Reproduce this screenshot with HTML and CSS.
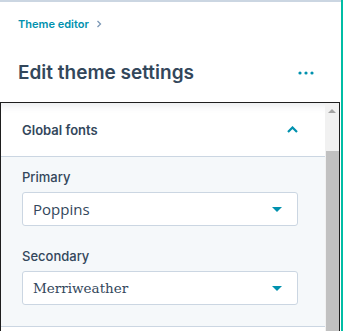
FILE: index.html
```html
<!DOCTYPE html>
<html lang="en">
<head>
    <meta charset="UTF-8">
    <meta name="viewport" content="width=device-width, initial-scale=1.0">
    <title>Edit theme settings</title>
    <link rel="stylesheet" href="styles.css">
</head>
<body>
<div class="panel">
    <div class="panel-head">
        <nav class="crumbs">
            <a href="#">Theme editor</a>
            <svg class="crumb-chevron" width="6" height="8" viewBox="0 0 6 8"><path d="M1.5 1 L4.5 4 L1.5 7" fill="none" stroke="#7c98b6" stroke-width="1.3"/></svg>
        </nav>
        <div class="title-row">
            <h1>Edit theme settings</h1>
            <button type="button" class="more">
                <svg width="16" height="4" viewBox="0 0 16 4"><circle cx="2" cy="2" r="1.6"/><circle cx="8" cy="2" r="1.6"/><circle cx="14" cy="2" r="1.6"/></svg>
            </button>
        </div>
    </div>

    <div class="scroll">
        <div class="scroll-content">
            <section class="group">
                <div class="group-head">
                    <h2>Global fonts</h2>
                    <svg width="11" height="7" viewBox="0 0 11 7"><path d="M1 6 L5.5 1.5 L10 6" fill="none" stroke="#0091ae" stroke-width="2.2"/></svg>
                </div>
                <div class="group-body">
                    <div class="field">
                        <span class="field-label">Primary</span>
                        <div class="select">
                            <span class="select-value font-poppins">Poppins</span>
                            <span class="caret"></span>
                        </div>
                    </div>
                    <div class="field">
                        <span class="field-label">Secondary</span>
                        <div class="select">
                            <span class="select-value font-merri">Merriweather</span>
                            <span class="caret"></span>
                        </div>
                    </div>
                </div>
            </section>
        </div>
        <div class="scrollbar">
            <div class="sb-up"></div>
            <div class="sb-thumb"></div>
        </div>
    </div>
</div>
</body>
</html>
```
FILE: styles.css
```css
body {
    margin: 0;
    background-color: #fff;
    font-family: Inter, "Noto Sans", sans-serif;
    color: #33475b;
}

.panel {
    width: 341px;
    height: 331px;
    border-right: 2px solid #00bda5;
    overflow: hidden;
}

.panel-head {
    border-top: 2px solid #cbd6e2;
    box-sizing: border-box;
    height: 102px;
    padding: 0 27px 0 18px;
}

.crumbs {
    display: flex;
    align-items: center;
    gap: 7px;
    padding-top: 14px;
    height: 16px;
}

.crumbs a {
    color: #0091ae;
    font-size: 11px;
    font-weight: 600;
    text-decoration: none;
}

.title-row {
    display: flex;
    align-items: center;
    justify-content: space-between;
    margin-top: 29px;
}

h1 {
    margin: 0;
    font-size: 19px;
    font-weight: 600;
    line-height: 24px;
}

.more {
    border: none;
    background: none;
    padding: 0;
    display: flex;
    fill: #0091ae;
}

.scroll {
    display: flex;
    height: 229px;
    border: 1px solid #1e1e1e;
    border-bottom: none;
    margin-right: 1px;
}

.scroll-content {
    flex: 1;
}

.group {
    border-bottom: 1px solid #cbd6e2;
}

.group-head {
    display: flex;
    align-items: center;
    justify-content: space-between;
    height: 53px;
    padding: 0 27px 0 21px;
    border-bottom: 1px solid #cbd6e2;
    background-color: #fff;
    box-shadow: inset 0 10px 8px -8px rgba(45, 62, 80, 0.12);
}

h2 {
    margin: 0;
    font-size: 13px;
    font-weight: 600;
}

.group-body {
    background-color: #f5f8fa;
    padding: 12px 27px 21px 21px;
    display: flex;
    flex-direction: column;
    gap: 22px;
}

.field {
    display: flex;
    flex-direction: column;
    gap: 7px;
}

.field-label {
    font-size: 13px;
    font-weight: 500;
    line-height: 16px;
}

.select {
    display: flex;
    align-items: center;
    justify-content: space-between;
    height: 34px;
    box-sizing: border-box;
    background-color: #fff;
    border: 1px solid #cbd6e2;
    border-radius: 3px;
    padding: 0 15px 0 10px;
}

.select-value {
    font-size: 15px;
}

.font-poppins {
    font-family: "Open Sans", sans-serif;
}

.font-merri {
    font-family: "DejaVu Serif", serif;
    font-size: 13.5px;
}

.caret {
    width: 0;
    height: 0;
    border-left: 5px solid transparent;
    border-right: 5px solid transparent;
    border-top: 5px solid #0091ae;
}

.scrollbar {
    width: 14px;
    background-color: #f1f1f1;
    display: flex;
    flex-direction: column;
}

.sb-up {
    height: 48px;
    position: relative;
}

.sb-up::before {
    content: "";
    position: absolute;
    top: 6px;
    left: 3px;
    border-left: 4px solid transparent;
    border-right: 4px solid transparent;
    border-bottom: 4px solid #a3a3a3;
}

.sb-thumb {
    flex: 1;
    background-color: #c1c1c1;
    margin: 0 0 0 1px;
}
```
